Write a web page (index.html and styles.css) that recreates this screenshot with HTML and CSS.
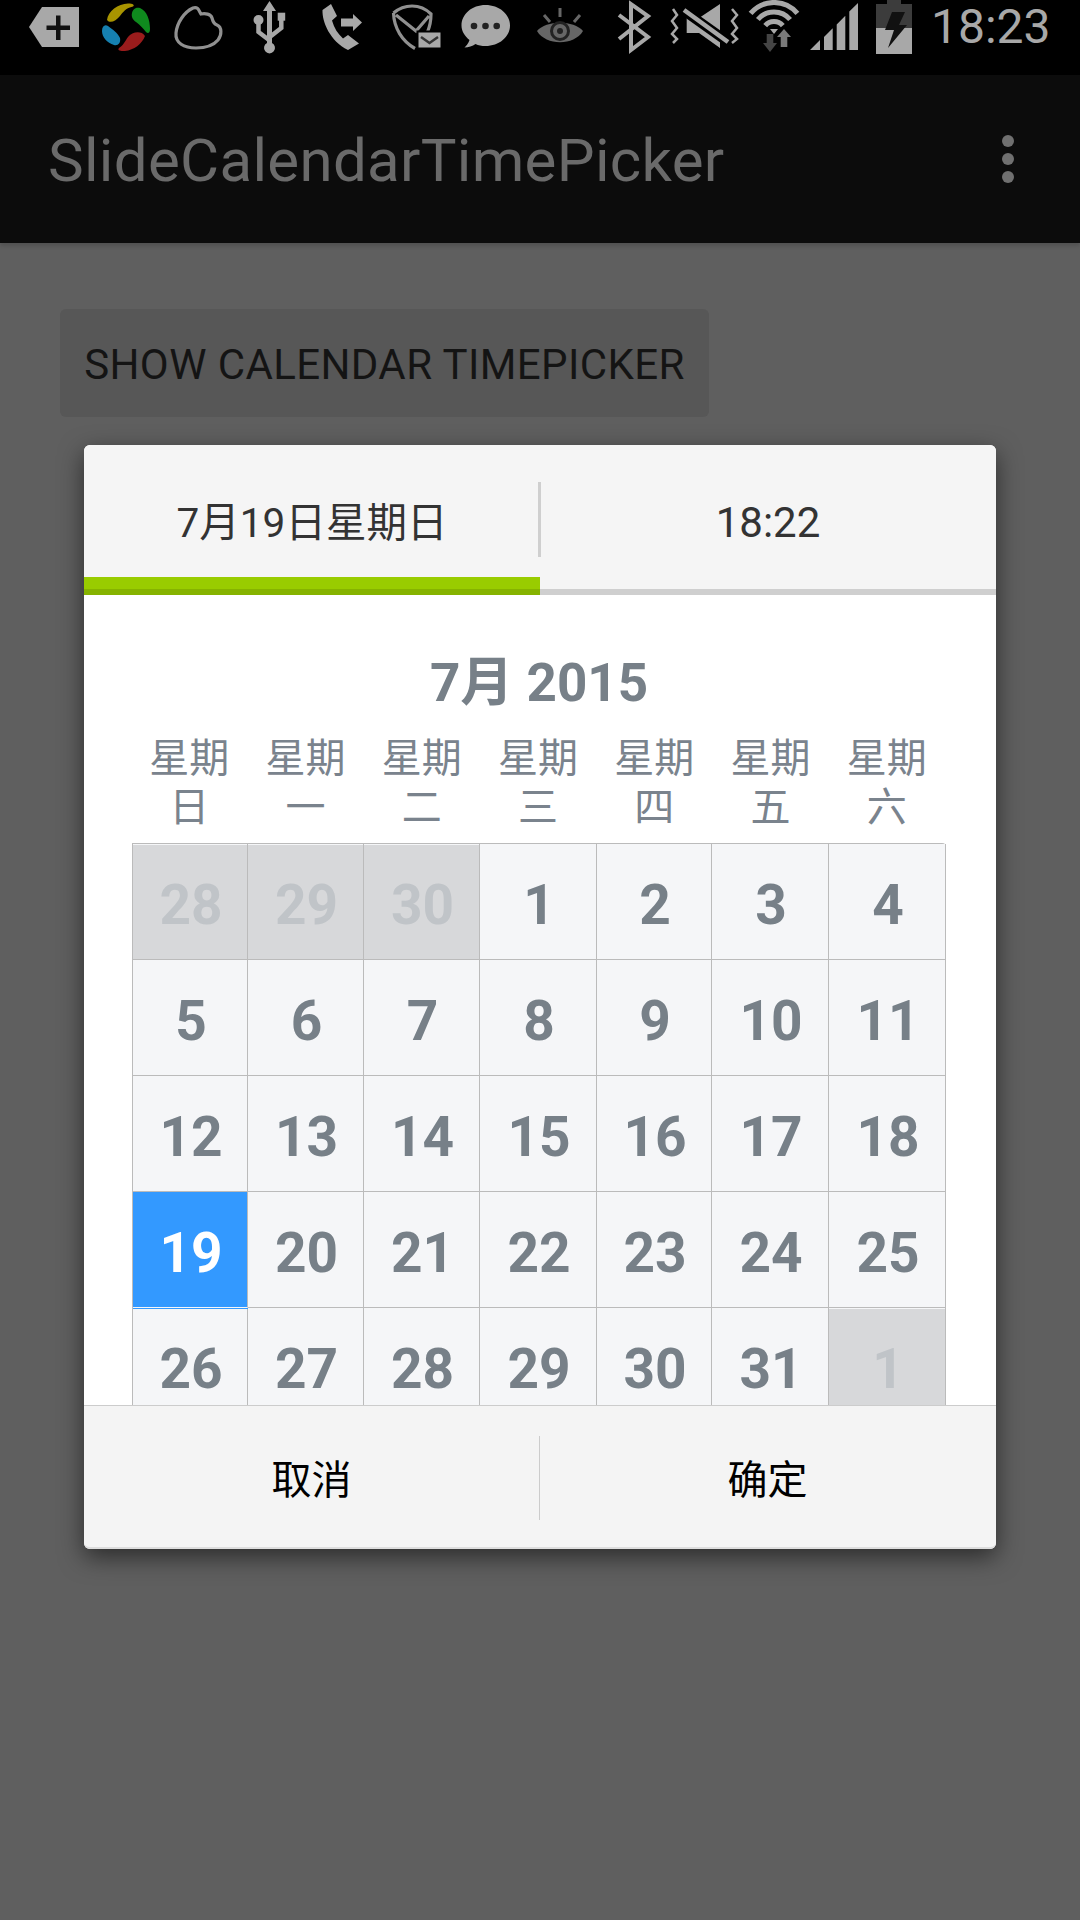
FILE: index.html
```html
<!DOCTYPE html>
<html lang="zh-CN">
<head>
    <meta charset="UTF-8" />
    <title>SlideCalendarTimePicker</title>
    <link rel="stylesheet" href="styles.css">
</head>
<body>

<div class="status-bar">
    <svg class="icon" width="75" height="60" viewBox="24 0 75 60">
        <path class="fill" d="M29 27 42 7h37v40H42z"/>
        <path fill="#111" d="M56 15.500h4.500v10h9.500v4.500h-9.500v10H56V30H46.500v-4.500H56z"/>
    </svg>
    <svg class="icon" width="69" height="60" viewBox="99 0 69 60">
        <path fill="#a89400" d="M107 20C108 11 118 4 128 3.500c5 0 7 1.500 5 3-7 1.500-10 5.500-13 9.500-4 5-10 8-13 4z"/>
        <path fill="#0f8a1e" d="M132 13c1-5 5-6 8-5 7 3 10 12 10 21 0 4-2 5-4 3-3-4-6-7-10-10-3-2-5-5-4-9z"/>
        <path fill="#9a1c1c" d="M119 48c4-2 6-7 9-11 4-5 13-7 17-1-3 8-11 14-20 15-5 .500-8-1-6-3z"/>
        <path fill="#1680b0" d="M102 31c0-5 3-7 6-5 4 3 10 7 12 12 1 5-2 8-6 7-7-2-12-8-12-14z"/>
    </svg>
    <svg class="icon" width="70" height="60" viewBox="168 0 70 60">
        <path class="line" stroke-width="3.200" d="M176 33c1-10 8-21 17-25 5-2 6 3 8 6 4-1 10 0 11 4 1 4 2 6 5 7 5 2 5 10 1 15-5 6-14 8-22 8-12 0-21-5-20-15z"/>
    </svg>
    <svg class="icon" width="62" height="60" viewBox="238 0 62 60">
        <path class="fill" d="M269.500 1l6.500 10h-4v32a5.500 5.500 0 1 1-5 0V11h-4z"/>
        <circle class="fill" cx="258.500" cy="20" r="5"/>
        <path class="fill" d="M277.700 12.700h7.500v8h-7.500z"/>
        <path class="line-light" stroke-width="4.500" d="M258.500 20v12l10.500 8M281.300 20v8l-11.500 9"/>
    </svg>
    <svg class="icon" width="77" height="60" viewBox="300 0 77 60">
        <path class="fill" d="M331 4l-8.500 6c-.5 12 7.500 31 25.500 40l11-6.500-11-8.500-5 3.500c-5-4.500-9-10.500-11-18l5-4.500z"/>
        <path class="fill" d="M341 18.500h12V14l9 8.500-9 8.500v-4.500h-12z"/>
    </svg>
    <svg class="icon" width="76" height="60" viewBox="377 0 76 60">
        <path class="line" stroke-width="3.200" d="M393.500 13c10.500-9 26.500-10 37.500 1 0 6-1 12-3.500 18M393.500 13c.5 15 8.500 28 21.500 35.500M396 15l20 16 13-15"/>
        <path class="fill" stroke="#000" stroke-width="2" d="M417.500 31.500h24v17h-24z"/>
        <path fill="none" stroke="#333" stroke-width="2.500" d="M421 37l8.500 6 8.500-6"/>
    </svg>
    <svg class="icon" width="67" height="60" viewBox="453 0 67 60">
        <path class="fill" d="M485.500 5C499 5 510 14 510 25.500S499 46 485.500 46c-4 0-7-.5-10-2-3 2-7 3.500-11 3.500 2-2 4-4.500 5-7.500-5-4-8-9-8-14.500C461.500 14 472 5 485.500 5z"/>
        <circle cx="474" cy="26" r="3.300" fill="#222"/>
        <circle cx="485.500" cy="26" r="3.300" fill="#222"/>
        <circle cx="496.700" cy="26" r="3.300" fill="#222"/>
    </svg>
    <svg class="icon" width="85" height="60" viewBox="520 0 85 60">
        <path fill="#666" d="M537 31c9-11 37-11 46 0-9 15-37 15-46 0z"/>
        <circle cx="560" cy="31" r="8.500" fill="none" stroke="#222" stroke-width="3"/>
        <circle cx="560" cy="31" r="3" fill="#222"/>
        <path fill="none" stroke="#666" stroke-width="3" d="M560 8v9M544 15l6 7M580 15l-6 7"/>
    </svg>
    <svg class="icon" width="55" height="60" viewBox="605 0 55 60">
        <path class="line-light" stroke-width="4" d="M619 15l29 22-17 13V4l17 12-29 23"/>
    </svg>
    <svg class="icon" width="85" height="60" viewBox="660 0 85 60">
        <path class="fill" d="M686.700 18H699l21-14v44l-21-15h-12.300z"/>
        <path fill="none" stroke="#000" stroke-width="10" d="M683 10l45 32"/>
        <path class="line-light" stroke-width="4.500" d="M684 10l44 32"/>
        <path class="line-light" stroke-width="2.500" d="M673 9l4 6-5 6 5 7-5 6 5 5-4 4M732 9l5 6-5 6 5 7-5 6 5 5-5 4"/>
    </svg>
    <svg class="icon" width="60" height="60" viewBox="745 0 60 60">
        <path class="line-light" stroke-width="5" d="M750.600 13.400a30.500 30.500 0 0 1 46.800 0M757.900 19.500a21 21 0 0 1 32.200 0M765.200 25.600a11.500 11.500 0 0 1 17.600 0"/>
        <path class="fill" d="M770 29h8l-4 5z"/>
        <path fill="#7a7a7a" d="M784 29l7 8h-3.700v10h-6.600V37H777z"/>
        <path fill="#444" d="M766.700 34h6.600v9h3.700l-7 9-7-9h3.700z"/>
    </svg>
    <svg class="icon" width="60" height="60" viewBox="805 0 60 60">
        <path class="fill" d="M810 50l10-10v10zM824 37l8.700-8.700V50H824zM836.700 24.500l8.600-8.700V50h-8.600zM849.300 11.500L858 3v47h-8.700z"/>
    </svg>
    <svg class="icon" width="60" height="60" viewBox="865 0 60 60">
        <path fill="#3c3c3c" d="M887 0h14v4h11v24h-36V4h11z"/>
        <path class="fill" d="M876 28h36v26h-36z"/>
        <path fill="#111" d="M892 12h13l-6 13h8l-19 23 6-18h-9z"/>
    </svg>
    <span class="clock">18:23</span>
</div>

<div class="app-bar">
    <span class="app-title">SlideCalendarTimePicker</span>
    <div class="overflow-menu">
        <span class="dot"></span>
        <span class="dot"></span>
        <span class="dot"></span>
    </div>
</div>

<div class="content">
    <button class="show-btn">SHOW CALENDAR TIMEPICKER</button>
</div>

<div class="dialog">
    <div class="tabs">
        <div class="tab tab-date">7月19日星期日</div>
        <div class="tab">18:22</div>
    </div>
    <div class="indicator">
        <div class="indicator-on"></div>
        <div class="indicator-off"></div>
    </div>

    <div class="calendar">
        <div class="month">7月 2015</div>
        <div class="weekdays">
            <div>星期日</div>
            <div>星期一</div>
            <div>星期二</div>
            <div>星期三</div>
            <div>星期四</div>
            <div>星期五</div>
            <div>星期六</div>
        </div>
        <div class="days">
            <div class="day other">28</div>
            <div class="day other">29</div>
            <div class="day other">30</div>
            <div class="day">1</div>
            <div class="day">2</div>
            <div class="day">3</div>
            <div class="day">4</div>
            <div class="day">5</div>
            <div class="day">6</div>
            <div class="day">7</div>
            <div class="day">8</div>
            <div class="day">9</div>
            <div class="day">10</div>
            <div class="day">11</div>
            <div class="day">12</div>
            <div class="day">13</div>
            <div class="day">14</div>
            <div class="day">15</div>
            <div class="day">16</div>
            <div class="day">17</div>
            <div class="day">18</div>
            <div class="day selected">19</div>
            <div class="day">20</div>
            <div class="day">21</div>
            <div class="day">22</div>
            <div class="day">23</div>
            <div class="day">24</div>
            <div class="day">25</div>
            <div class="day">26</div>
            <div class="day">27</div>
            <div class="day">28</div>
            <div class="day">29</div>
            <div class="day">30</div>
            <div class="day">31</div>
            <div class="day other">1</div>
        </div>
    </div>

    <div class="actions">
        <div class="action action-divider">取消</div>
        <div class="action">确定</div>
    </div>
</div>

</body>
</html>
```

FILE: styles.css
```css
html, body {
    margin: 0;
    padding: 0;
    height: 100%;
    background: #5f5f5f;
    font-family: Roboto, "Noto Sans CJK SC", sans-serif;
    overflow: hidden;
}

/* STATUS BAR */
.status-bar {
    display: flex;
    align-items: flex-start;
    height: 75px;
    padding-left: 24px;
    background: #000;
    box-sizing: border-box;
}
.icon {
    flex: none;
}
.fill {
    fill: #a8a8a8;
}
.line {
    fill: none;
    stroke: #909090;
}
.line-light {
    fill: none;
    stroke: #a8a8a8;
}
.clock {
    margin-left: 6px;
    font-size: 48px;
    line-height: 54px;
    color: #a8a8a8;
}

/* APP BAR */
.app-bar {
    display: flex;
    align-items: center;
    justify-content: space-between;
    height: 168px;
    padding: 0 66px 0 48px;
    box-sizing: border-box;
    background: #0c0c0c;
    box-shadow: 0 3px 4px rgba(0,0,0,0.15);
}
.app-title {
    padding-top: 3px;
    font-size: 60px;
    letter-spacing: 0.32px;
    color: #6a6a6a;
}
.overflow-menu {
    display: flex;
    flex-direction: column;
    gap: 6px;
}
.dot {
    width: 12px;
    height: 12px;
    border-radius: 50%;
    background: #707070;
}

/* PAGE CONTENT UNDER THE DIALOG */
.content {
    padding: 66px 0 0 60px;
}
.show-btn {
    display: block;
    width: 649px;
    height: 108px;
    padding: 2px 0 0;
    border: none;
    border-radius: 6px;
    background: #575757;
    font-family: inherit;
    font-size: 42px;
    letter-spacing: 0.4px;
    color: #141414;
}

/* DIALOG */
.dialog {
    position: absolute;
    top: 445px;
    left: 84px;
    width: 912px;
    height: 1104px;
    display: flex;
    flex-direction: column;
    border-radius: 6px;
    background: #fff;
    box-shadow: 0 8px 24px rgba(0,0,0,0.55);
}

.tabs {
    display: flex;
    height: 132px;
    background: #f5f5f5;
    border-radius: 6px 6px 0 0;
}
.tab {
    flex: 1;
    display: flex;
    align-items: center;
    justify-content: center;
    padding-top: 23px;
    font-size: 42px;
    line-height: 50px;
    color: #333;
}
.tab-date {
    position: relative;
    font-size: 40.5px;
}
.tab-date::after {
    content: "";
    position: absolute;
    top: 37px;
    right: -1px;
    width: 3px;
    height: 75px;
    background: #cfcfcf;
}

.indicator {
    display: flex;
    height: 18px;
    background: #f5f5f5;
}
.indicator-on {
    flex: 1;
    background: #99cc00;
    border-bottom: 6px solid #86b300;
}
.indicator-off {
    flex: 1;
    align-self: flex-end;
    height: 6px;
    background: #cfcfcf;
}

/* CALENDAR */
.calendar {
    flex: 1;
    min-height: 0;
    overflow: hidden;
    padding: 56px 50px 0 48px;
}
.month {
    height: 64px;
    line-height: 64px;
    margin-bottom: 19px;
    text-align: center;
    font-size: 53px;
    font-weight: 700;
    color: #778088;
}
.weekdays {
    display: grid;
    grid-template-columns: repeat(7, 1fr);
    margin: 0 1px 11px -1px;
    text-align: center;
    font-size: 40px;
    line-height: 49px;
    color: #7a838d;
}
.weekdays div {
    padding: 0 2px;
}
.days {
    display: grid;
    grid-template-columns: 115px 116px 116px 117px 115px 117px 117px;
    grid-auto-rows: 116px;
    border-left: 1px solid #bbb;
    border-top: 1px solid #bbb;
    border-top-right-radius: 4px;
}
.day {
    display: flex;
    align-items: center;
    justify-content: center;
    box-sizing: border-box;
    padding: 6px 0 0 2px;
    border-right: 1px solid #bbb;
    border-bottom: 1px solid #bbb;
    background: #f5f6f8;
    font-size: 55px;
    font-weight: 700;
    color: #778088;
}
.day.other {
    background: #d7d8da;
    color: #c0c4c8;
    box-shadow: inset 0 1px 0 #f5f6f8;
}
.day.selected {
    background: #3399ff;
    color: #fff;
    border-bottom-color: #f5f6f8;
    box-shadow: 0 1px 0 #3399ff;
    position: relative;
}

/* FOOTER BUTTONS */
.actions {
    display: flex;
    height: 144px;
    box-sizing: border-box;
    border-top: 1px solid #ccc;
    border-bottom: 2px solid #ddd;
    border-radius: 0 0 6px 6px;
    background: #f4f4f4;
}
.action {
    flex: 1;
    display: flex;
    align-items: center;
    justify-content: center;
    padding-right: 1px;
    font-size: 40px;
    color: #000;
}
.action-divider {
    position: relative;
}
.action-divider::after {
    content: "";
    position: absolute;
    top: 30px;
    right: 0;
    width: 1px;
    height: 84px;
    background: #ccc;
}
```
